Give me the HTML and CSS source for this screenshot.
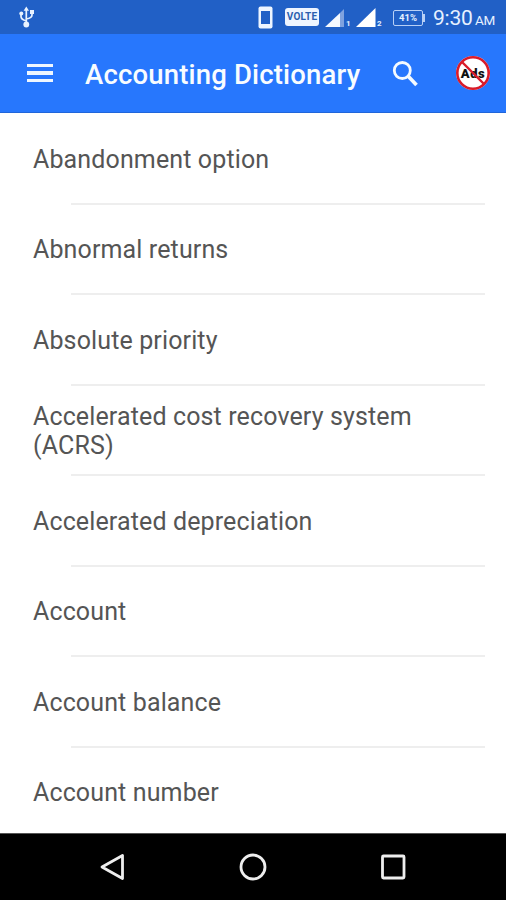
FILE: index.html
```html
<!DOCTYPE html>
<html lang="en">
<head>
<meta charset="utf-8">
<title>Accounting Dictionary</title>
<link rel="stylesheet" href="styles.css">
</head>
<body>
<div class="screen">
  <div class="status">
    <svg class="usb" width="18" height="24" viewBox="0 0 18 24" fill="none" stroke="#e8f2ff" stroke-width="1.7"><path d="M8.300 5v14M3 8.500v3q0 3 5.300 4.500M14 7v3q0 3-5.700 4"/><g fill="#e8f2ff" stroke="none"><path d="M8.300 1.500l2.700 4.300H5.600zM12 5h4v4h-4z"/><circle cx="3.300" cy="8.500" r="2"/><circle cx="8.300" cy="19.500" r="2.900"/></g></svg>
    <svg class="phone" width="15" height="23" viewBox="0 0 15 23"><rect x=".5" y=".5" width="14" height="22" rx="2" fill="#eef5ff"/><path fill="#2160c6" d="M3 5h9v13H3z"/></svg>
    <span class="volte">VOLTE</span>
    <svg class="signal" width="20" height="20" viewBox="0 0 20 20"><path fill="#f5f9ff" d="M0 19L15 5v14z"/><path fill="#7fa2df" d="M15 5l4-4v18h-4z"/></svg><span class="sim">1</span>
    <svg class="signal second" width="20" height="20" viewBox="0 0 20 20"><path fill="#fff" d="M0 19L19.500 0v19z"/></svg><span class="sim">2</span>
    <span class="battery">41%</span>
    <span class="time">9:30</span><span class="ampm">AM</span>
  </div>
  <header class="toolbar">
    <span class="menu"><i></i><i></i><i></i></span>
    <h1>Accounting Dictionary</h1>
    <svg class="search" width="28" height="28" viewBox="0 0 28 28" fill="none" stroke="#f4faff"><circle cx="10.300" cy="10.500" r="8" stroke-width="2.800"/><path d="M16 16l8.500 9" stroke-width="3.600"/></svg>
    <span class="noads"><span>Ads</span><svg width="34" height="34" viewBox="0 0 34 34" fill="none" stroke="#d91b2a"><circle cx="17" cy="17" r="15.700" stroke-width="2.600"/><path d="M6 6l22 22" stroke-width="2.400"/></svg></span>
  </header>
  <ul class="list">
    <li>Abandonment option</li>
    <li>Abnormal returns</li>
    <li>Absolute priority</li>
    <li>Accelerated cost recovery system (ACRS)</li>
    <li>Accelerated depreciation</li>
    <li>Account</li>
    <li>Account balance</li>
    <li>Account number</li>
  </ul>
  <nav class="nav">
    <svg width="28" height="30" viewBox="0 0 28 30"><path d="M3 15L23.500 3.500v23z" fill="none" stroke="#eee" stroke-width="2.800" stroke-linejoin="round"/></svg>
    <svg width="28" height="30" viewBox="0 0 28 30"><circle cx="14" cy="15" r="12" fill="none" stroke="#eee" stroke-width="2.800"/></svg>
    <svg width="28" height="30" viewBox="0 0 28 30"><rect x="3.500" y="4" width="21.500" height="22" rx="1" fill="none" stroke="#eee" stroke-width="2.800"/></svg>
  </nav>
</div>
</body>
</html>
```

FILE: styles.css
```css
* { box-sizing: border-box; }
body { margin: 0; background: #fff; font-family: Roboto, "Liberation Sans", sans-serif; }
.screen { width: 506px; height: 900px; display: flex; flex-direction: column; overflow: hidden; }
.status { height: 34px; flex: none; display: flex; align-items: center; background: #2160c6; color: #e6f1ff; }
.usb { margin-left: 18px; }
.phone { margin-left: 222px; }
.volte { width: 34px; height: 18px; margin-left: 12px; border-radius: 3px; background: #eef5ff; color: #2b5fae; font-size: 10px; line-height: 18px; font-weight: 700; letter-spacing: .2px; text-align: center; }
.signal { margin-left: 6px; margin-top: 2px; }
.sim { width: 5px; margin-left: 1px; padding-top: 14px; font-size: 8px; line-height: 8px; font-weight: 700; }
.second { margin-left: 5px; }
.battery { position: relative; width: 30px; height: 16px; margin-left: 11px; margin-top: 1px; border: 1.500px solid #b8d0f6; border-radius: 2px; font-size: 9.500px; line-height: 14px; font-weight: 700; text-align: center; }
.battery::after { content: ""; position: absolute; left: 29px; top: 3px; width: 2px; height: 8px; background: #b8d0f6; }
.time { width: 39px; margin-left: 10px; font-size: 21px; letter-spacing: -.2px; white-space: nowrap; padding-top: 2px; }
.ampm { margin-left: 3px; font-size: 13.500px; padding-top: 6px; letter-spacing: -.3px; }
.toolbar { height: 79px; flex: none; display: flex; align-items: center; background: #2777fd; border-bottom: 1px solid #2065da; }
.menu { width: 26px; margin-left: 27px; display: flex; flex-direction: column; gap: 4px; }
.menu i { height: 3.500px; background: #eff7ff; }
h1 { width: 290px; margin: 4px 0 0 32px; font-size: 27.500px; line-height: 32px; letter-spacing: .17px; font-weight: 500; color: #f8fcff; white-space: nowrap; }
.search { margin-left: 17px; margin-top: 1px; }
.noads { position: relative; width: 34px; height: 34px; margin-left: 36px; border-radius: 50%; background: #fff; display: flex; align-items: center; justify-content: center; font-size: 13px; letter-spacing: .5px; font-weight: 900; color: #111; }
.noads svg { position: absolute; inset: 0; }
.list { flex: 1; min-height: 0; margin: 0; padding: 0; list-style: none; overflow: hidden; }
li { height: 90.500px; padding: 2px 33px 0; display: flex; align-items: center; position: relative; font-size: 25px; line-height: 29.200px; letter-spacing: .13px; color: #555; }
li::after { content: ""; position: absolute; left: 71px; right: 21px; bottom: -1px; height: 2px; background: #eee; }
.nav { height: 67px; flex: none; display: flex; justify-content: center; align-items: center; gap: 112px; background: #000; border-top: 1px solid #555; }
```
